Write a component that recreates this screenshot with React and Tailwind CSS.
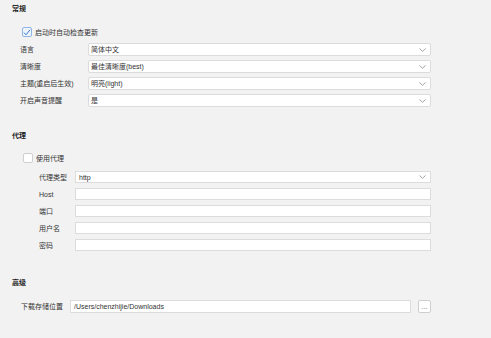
const font = {
  fontFamily: '"Liberation Sans", "Noto Sans CJK SC", sans-serif',
};

function Chevron() {
  return (
    <svg width="7" height="4" viewBox="0 0 7 4" className="shrink-0">
      <path d="M0.5 0.5 L3.5 3.3 L6.5 0.5" fill="none" stroke="#8a8a8a" strokeWidth="0.8" />
    </svg>
  );
}

function SelectBox({ value }) {
  return (
    <div className="flex-1 h-[13px] flex items-center justify-between bg-white border border-[#dcdcdc] rounded-[2px] pl-[2px] pr-[4px]">
      <span className="leading-none">{value}</span>
      <Chevron />
    </div>
  );
}

function InputBox({ value, h = "h-[12px]" }) {
  return (
    <div className={`flex-1 ${h} flex items-center bg-white border border-[#dcdcdc] pl-[3px]`}>
      <span className="leading-none">{value}</span>
    </div>
  );
}

function Checkbox({ checked, label }) {
  return (
    <div className="flex items-center h-[10px] gap-[3px]">
      {checked ? (
        <div className="w-[10px] h-[10px] rounded-[2px] border border-[#8fb4e6] bg-[#eef4fc] flex items-center justify-center">
          <svg width="8" height="7" viewBox="0 0 8 7">
            <path d="M1 3.6 L3 5.8 L7 0.8" fill="none" stroke="#3b7ddb" strokeWidth="1" />
          </svg>
        </div>
      ) : (
        <div className="w-[10px] h-[10px] rounded-[2px] border border-[#cfcfcf] bg-white" />
      )}
      <span className="leading-none">{label}</span>
    </div>
  );
}

function Heading({ children, mt }) {
  return (
    <div className={`${mt} pl-[12px] h-[10px] leading-[10px] font-bold text-[#222]`}>{children}</div>
  );
}

const general = [
  ["语言", "简体中文"],
  ["清晰度", "最佳清晰度(best)"],
  ["主题(重启后生效)", "明亮(light)"],
  ["开启声音提醒", "是"],
];

const proxy = [
  ["代理类型", "http", true],
  ["Host", ""],
  ["端口", ""],
  ["用户名", ""],
  ["密码", ""],
];

export default function App() {
  return (
    <div className="w-[491px] h-[338px] bg-[#f2f2f2] text-[7px] text-[#333] overflow-hidden" style={font}>
      <div className="pt-[4px]">
        <Heading mt="mt-0">常规</Heading>
        <div className="mt-[13px] pl-[22px]">
          <Checkbox checked label="启动时自动检查更新" />
        </div>
        <div className="mt-[6px] flex flex-col gap-[4px] pl-[20px] w-[431px]">
          {general.map(([label, value]) => (
            <div key={label} className="flex items-center">
              <span className="w-[68px] shrink-0 leading-none">{label}</span>
              <SelectBox value={value} />
            </div>
          ))}
        </div>

        <Heading mt="mt-[24px]">代理</Heading>
        <div className="mt-[12px] pl-[23px]">
          <Checkbox label="使用代理" />
        </div>
        <div className="mt-[8px] flex flex-col gap-[5px] pl-[39px] w-[431px]">
          {proxy.map(([label, value, isSelect]) => (
            <div key={label} className="flex items-center">
              <span className="w-[36px] shrink-0 leading-none">{label}</span>
              {isSelect ? (
                <div className="flex-1 h-[12px] flex items-center justify-between bg-white border border-[#dcdcdc] pl-[3px] pr-[4px]">
                  <span className="leading-none">{value}</span>
                  <Chevron />
                </div>
              ) : (
                <InputBox value={value} />
              )}
            </div>
          ))}
        </div>

        <Heading mt="mt-[27px]">高级</Heading>
        <div className="mt-[12px] flex items-center pl-[21px] w-[431px]">
          <span className="w-[49px] shrink-0 leading-none">下载存储位置</span>
          <InputBox value="/Users/chenzhijie/Downloads" h="h-[13px]" />
          <div className="ml-[7px] w-[13px] h-[13px] bg-white border border-[#cfcfcf] rounded-[2px] flex items-center justify-center leading-none text-[#666]">
            ...
          </div>
        </div>
      </div>
    </div>
  );
}
